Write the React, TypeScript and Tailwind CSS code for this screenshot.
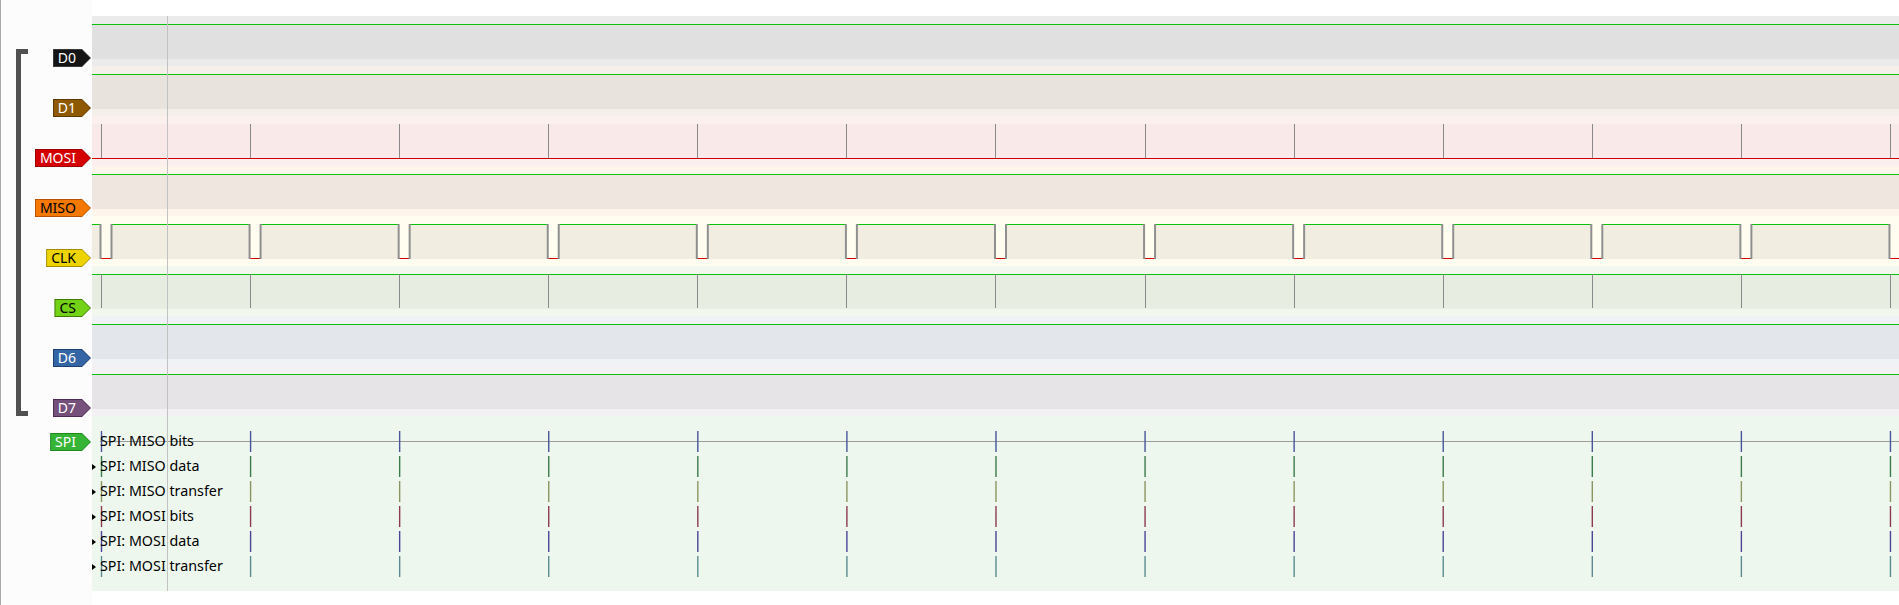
import React from 'react';

const W = 1807;
const PITCH = 149.08;
const ticks = Array.from({ length: 13 }, (_, k) => 9 + PITCH * k);

const GREEN = '#0bc20b';
const RED = '#d40000';

type Kind = 'high' | 'low' | 'clk' | 'cs';

const channels: {
  name: string;
  kind: Kind;
  outer: string;
  inner: string;
  border: string;
  fill: string;
  text: string;
}[] = [
  { name: 'D0', kind: 'high', outer: '#ebebeb', inner: '#e0e0e0', border: 'bg-[#3a3a3a]', fill: 'bg-[#151515]', text: 'text-white' },
  { name: 'D1', kind: 'high', outer: '#f4efe9', inner: '#e8e4dd', border: 'bg-[#5e3a02]', fill: 'bg-[#8f5902]', text: 'text-white' },
  { name: 'MOSI', kind: 'low', outer: '#fcf0ee', inner: '#f9e9e9', border: 'bg-[#9a0000]', fill: 'bg-[#d40000]', text: 'text-white' },
  { name: 'MISO', kind: 'high', outer: '#fdf4ec', inner: '#efe7df', border: 'bg-[#b85300]', fill: 'bg-[#f57900]', text: 'text-black' },
  { name: 'CLK', kind: 'clk', outer: '#fefdf0', inner: '#f1eee1', border: 'bg-[#a88c00]', fill: 'bg-[#edd400]', text: 'text-black' },
  { name: 'CS', kind: 'cs', outer: '#f3f8ee', inner: '#e8ede2', border: 'bg-[#3f7d05]', fill: 'bg-[#73d216]', text: 'text-black' },
  { name: 'D6', kind: 'high', outer: '#f0f2f5', inner: '#e3e6eb', border: 'bg-[#1d3f73]', fill: 'bg-[#3465a4]', text: 'text-white' },
  { name: 'D7', kind: 'high', outer: '#f3f1f4', inner: '#e7e4e7', border: 'bg-[#4d2d55]', fill: 'bg-[#75507b]', text: 'text-white' },
];

const decoderRows = [
  { label: 'SPI: MISO bits', color: '#48559a', arrow: false },
  { label: 'SPI: MISO data', color: '#3b7b4c', arrow: true },
  { label: 'SPI: MISO transfer', color: '#8b9560', arrow: true },
  { label: 'SPI: MOSI bits', color: '#8d3a4d', arrow: true },
  { label: 'SPI: MOSI data', color: '#4a4597', arrow: true },
  { label: 'SPI: MOSI transfer', color: '#5b8b91', arrow: true },
];

function Label({ name, border, fill, text }: { name: string; border: string; fill: string; text: string }) {
  return (
    <div className={`${border} h-[18px] p-px [clip-path:polygon(0_0,calc(100%_-_9px)_0,100%_50%,calc(100%_-_9px)_100%,0_100%)]`}>
      <div
        className={`${fill} ${text} flex h-[16px] items-center pl-[4px] pr-[14px] text-[14px] leading-none [clip-path:polygon(0_0,calc(100%_-_8px)_0,100%_50%,calc(100%_-_8px)_100%,0_100%)]`}
      >
        {name}
      </div>
    </div>
  );
}

function Trace({ kind, outer, inner }: { kind: Kind; outer: string; inner: string }) {
  const falls = ticks.map((t) => t - 0.5);
  return (
    <svg width={W} height={50} className="block">
      <rect x={0} y={0} width={W} height={50} fill={outer} />
      {(kind === 'high' || kind === 'cs' || kind === 'low') && (
        <rect x={0} y={8} width={W} height={35} fill={inner} />
      )}
      {(kind === 'high' || kind === 'cs') && (
        <line x1={0} x2={W} y1={8.5} y2={8.5} stroke={GREEN} strokeWidth={1} />
      )}
      {kind === 'low' && <line x1={0} x2={W} y1={42.5} y2={42.5} stroke={RED} strokeWidth={1} />}
      {(kind === 'low' || kind === 'cs') &&
        ticks.map((t, i) => (
          <line key={i} x1={Math.round(t) + 0.5} x2={Math.round(t) + 0.5} y1={8} y2={42} stroke="#8a8a8a" strokeWidth={1} />
        ))}
      {kind === 'clk' && (
        <g>
          {falls.map((f, i) => {
            const prevRise = i === 0 ? 0 : falls[i - 1] + 11;
            return <rect key={'f' + i} x={prevRise} y={8} width={f - prevRise} height={35} fill={inner} />;
          })}
          <rect x={falls[falls.length - 1] + 11} y={8} width={W} height={35} fill={inner} />
          {falls.map((f, i) => {
            const prevRise = i === 0 ? 0 : falls[i - 1] + 11;
            return <line key={'h' + i} x1={prevRise} x2={f} y1={8.5} y2={8.5} stroke={GREEN} strokeWidth={1} />;
          })}
          <line x1={falls[falls.length - 1] + 11} x2={W} y1={8.5} y2={8.5} stroke={GREEN} strokeWidth={1} />
          {falls.map((f, i) => (
            <g key={'p' + i}>
              <line x1={f} x2={f + 11} y1={42.5} y2={42.5} stroke={RED} strokeWidth={1} />
              <line x1={f} x2={f} y1={8} y2={43} stroke="#8f8f8f" strokeWidth={2} />
              <line x1={f + 11} x2={f + 11} y1={8} y2={43} stroke="#8f8f8f" strokeWidth={2} />
            </g>
          ))}
        </g>
      )}
    </svg>
  );
}

function DecoderRow({ label, color, arrow, first }: { label: string; color: string; arrow: boolean; first: boolean }) {
  return (
    <div className="relative flex h-[25px] items-center">
      <svg width={W} height={25} className="absolute inset-0">
        {first && <line x1={8} x2={W} y1={12.5} y2={12.5} stroke="#9c9c9c" strokeWidth={1} />}
        {ticks.map((t, i) => (
          <line key={i} x1={t + 0.5} x2={t + 0.5} y1={2} y2={23} stroke={color} strokeWidth={1.4} />
        ))}
      </svg>
      {arrow ? (
        <div className="relative h-0 w-0 border-y-[3.5px] border-l-[4px] border-y-transparent border-l-black" />
      ) : (
        <div className="w-[4px]" />
      )}
      <span className="relative ml-[4px] text-[14.3px] leading-none text-black">{label}</span>
    </div>
  );
}

export default function App() {
  return (
    <div className="flex h-[605px] w-[1899px] overflow-hidden bg-white font-['Noto_Sans',sans-serif]">
      <div className="flex w-[92px] shrink-0 border-l border-[#a9a9a9] bg-[#fcfcfc]">
        <div className="w-[27px] shrink-0 pl-[15px]">
          <div className="mt-[49px] h-[367px] w-[12px] border-y-[5px] border-l-[5px] border-[#505050]" />
        </div>
        <div className="flex flex-1 flex-col items-end pr-[1px] pt-[16px]">
          {channels.map((c) => (
            <div key={c.name} className="h-[50px] pt-[33px]">
              <Label name={c.name} border={c.border} fill={c.fill} text={c.text} />
            </div>
          ))}
          <div className="pt-[17px]">
            <Label name="SPI" border="bg-[#1e8a1e]" fill="bg-[#35b435]" text="text-white" />
          </div>
        </div>
      </div>

      <div className="relative flex-1 pt-[16px]">
        {channels.map((c) => (
          <Trace key={c.name} kind={c.kind} outer={c.outer} inner={c.inner} />
        ))}
        <div className="h-[175px] bg-[#eef7ee] pt-[13px]">
          {decoderRows.map((r, i) => (
            <DecoderRow key={r.label} label={r.label} color={r.color} arrow={r.arrow} first={i === 0} />
          ))}
        </div>
        <div className="absolute left-[75px] top-[16px] h-[575px] w-px bg-[#c2c2c2]" />
      </div>
    </div>
  );
}
